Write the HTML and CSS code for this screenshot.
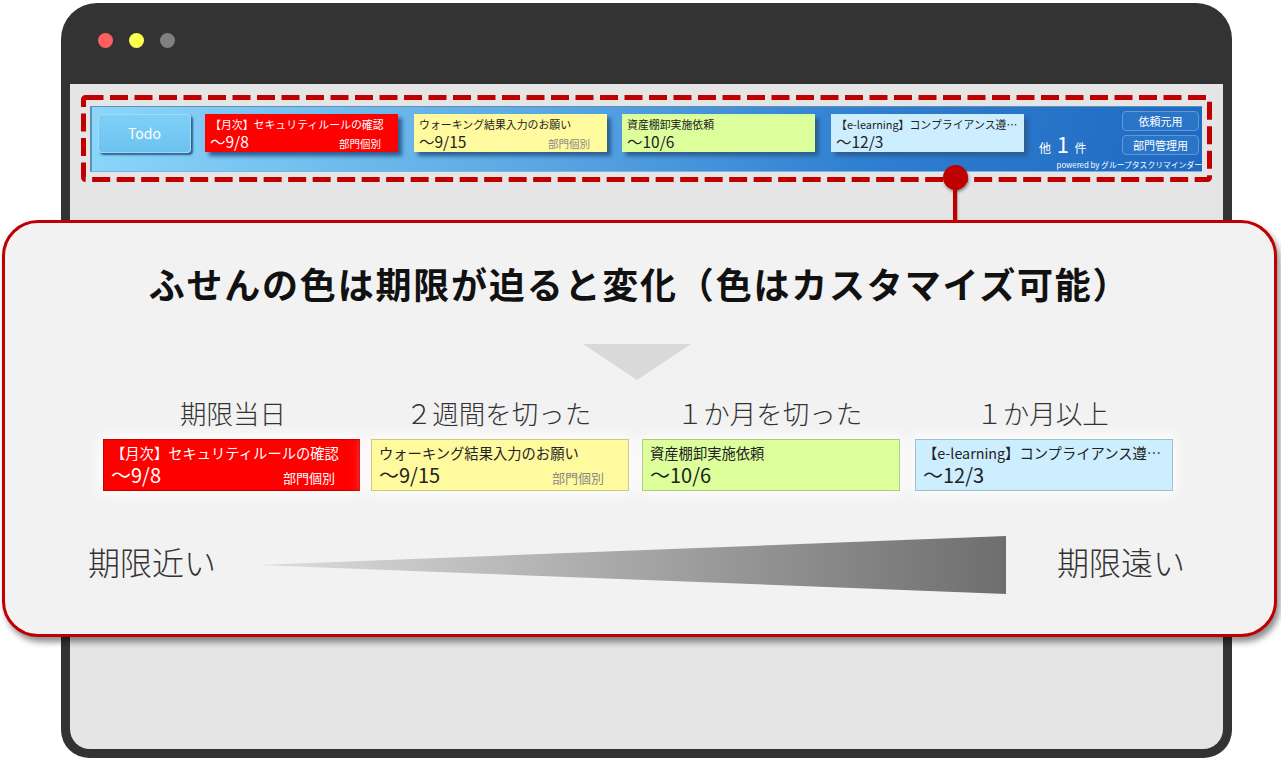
FILE: index.html
```html
<!DOCTYPE html>
<html lang="ja">
<head>
    <meta charset="UTF-8">
    <title>ふせんの色</title>
    <link rel="stylesheet" href="styles.css">
</head>
<body>
    <div class="stage">
        <div class="window">
            <div class="titlebar">
                <span class="dot dot-red"></span>
                <span class="dot dot-yellow"></span>
                <span class="dot dot-grey"></span>
            </div>
            <div class="screen">
                <div class="bar">
                    <div class="todo">Todo</div>
                    <div class="note note-red">
                        <div class="note-title">【月次】セキュリティルールの確認</div>
                        <div class="note-row"><span class="note-date">～9/8</span><span class="note-tag">部門個別</span></div>
                    </div>
                    <div class="note note-yellow">
                        <div class="note-title">ウォーキング結果入力のお願い</div>
                        <div class="note-row"><span class="note-date">～9/15</span><span class="note-tag">部門個別</span></div>
                    </div>
                    <div class="note note-green">
                        <div class="note-title">資産棚卸実施依頼</div>
                        <div class="note-row"><span class="note-date">～10/6</span></div>
                    </div>
                    <div class="note note-blue">
                        <div class="note-title">【e-learning】コンプライアンス遵…</div>
                        <div class="note-row"><span class="note-date">～12/3</span></div>
                    </div>
                    <div class="others">他 <b>1</b> 件</div>
                    <div class="bar-buttons">
                        <div class="bar-button">依頼元用</div>
                        <div class="bar-button">部門管理用</div>
                    </div>
                    <div class="powered">powered by グループタスクリマインダー</div>
                </div>
            </div>
        </div>

        <svg class="dashes" width="1281" height="200" viewBox="0 0 1281 200">
            <rect x="83.5" y="97.5" width="1126" height="82" rx="2" fill="none" stroke="#c00000" stroke-width="5" stroke-dasharray="18 6.5"/>
        </svg>
        <div class="marker"></div>
        <div class="marker-stem"></div>

        <div class="callout">
            <h1 class="callout-title">ふせんの色は期限が迫ると変化（色はカスタマイズ可能）</h1>
            <div class="arrow"></div>
            <div class="levels">
                <div class="level">
                    <div class="level-label">期限当日</div>
                    <div class="note note-large note-red">
                        <div class="note-title">【月次】セキュリティルールの確認</div>
                        <div class="note-row"><span class="note-date">～9/8</span><span class="note-tag">部門個別</span></div>
                    </div>
                </div>
                <div class="level">
                    <div class="level-label">２週間を切った</div>
                    <div class="note note-large note-yellow">
                        <div class="note-title">ウォーキング結果入力のお願い</div>
                        <div class="note-row"><span class="note-date">～9/15</span><span class="note-tag">部門個別</span></div>
                    </div>
                </div>
                <div class="level">
                    <div class="level-label">１か月を切った</div>
                    <div class="note note-large note-green">
                        <div class="note-title">資産棚卸実施依頼</div>
                        <div class="note-row"><span class="note-date">～10/6</span></div>
                    </div>
                </div>
                <div class="level">
                    <div class="level-label">１か月以上</div>
                    <div class="note note-large note-blue">
                        <div class="note-title">【e-learning】コンプライアンス遵…</div>
                        <div class="note-row"><span class="note-date">～12/3</span></div>
                    </div>
                </div>
            </div>
            <div class="scale">
                <span class="scale-label">期限近い</span>
                <div class="wedge"></div>
                <span class="scale-label">期限遠い</span>
            </div>
        </div>
    </div>
</body>
</html>
```

FILE: styles.css
```css
body {
    margin: 0;
    background: #fff;
    font-family: "Noto Sans CJK JP", "Noto Sans", sans-serif;
    color: #222;
}
.stage {
    position: relative;
    width: 1281px;
    height: 761px;
    box-sizing: border-box;
    padding: 3px 49px 3px 61px;
    overflow: hidden;
}
.window {
    display: flex;
    flex-direction: column;
    height: 100%;
    background: #333;
    border-radius: 36px 36px 28px 28px;
}
.titlebar {
    display: flex;
    gap: 16px;
    align-items: center;
    height: 81px;
    box-sizing: border-box;
    padding: 0 0 7px 37px;
}
.dot {
    width: 15px;
    height: 15px;
    border-radius: 50%;
}
.dot-red { background: #ff5f5f; }
.dot-yellow { background: #ffff4d; }
.dot-grey { background: #808080; }
.screen {
    flex: 1;
    margin: 0 9px 9px;
    padding: 22px 21px 0 20px;
    background: #e5e5e5;
    border-radius: 0 0 20px 20px;
}
.bar {
    position: relative;
    display: flex;
    align-items: flex-start;
    height: 66px;
    box-sizing: border-box;
    padding: 4px 3px 0 8px;
    background: linear-gradient(100deg, #8bd6fa 0%, #5ba8e4 40%, #2f7fd2 70%, #1f69c0 100%);
    border-left: 2px solid #5f93ad;
    border-top: 1px solid #5f93ad;
    border-bottom: 1px solid #7fb4dc;
}
.todo {
    width: 93px;
    height: 39px;
    margin: 3px 14px 0 -2px;
    flex: none;
    box-sizing: border-box;
    background: linear-gradient(#7fd0f7, #6cc2f0);
    border: 1px solid #9fdcf5;
    border-radius: 4px;
    box-shadow: 2px 2px 2px #2c5f8c;
    color: #fff;
    font-size: 14px;
    line-height: 37px;
    text-align: center;
}
.note {
    flex: none;
    width: 193px;
    height: 38px;
    box-sizing: border-box;
    margin: 3px 15px 0 0;
    padding: 3px 4px 0 5px;
    box-shadow: 4px 4px 4px #2d5f93;
    overflow: hidden;
    white-space: nowrap;
}
.note-title {
    font-size: 10.9px;
    line-height: 15px;
}
.note-row {
    display: flex;
    align-items: baseline;
    justify-content: space-between;
    padding-right: 13px;
}
.note-date {
    font-size: 15.5px;
    line-height: 19px;
}
.note-tag {
    font-size: 10.5px;
}
.note-red { margin-right: 16px; background: #ff0000; color: #fff; }
.note-yellow { background: #fffa9e; color: #222; }
.note-yellow .note-tag { color: #888; }
.note-green { margin-right: 16px; background: #dcff9c; color: #222; }
.note-blue { background: #cceeff; color: #222; }
.others {
    margin: 21px 0 0;
    color: #fff;
    font-size: 12px;
    line-height: 22px;
    word-spacing: 3px;
    white-space: nowrap;
}
.others b {
    font-size: 22px;
    font-weight: 400;
}
.bar-buttons {
    display: flex;
    flex-direction: column;
    gap: 4px;
    margin-left: auto;
}
.bar-button {
    width: 77px;
    height: 20px;
    box-sizing: border-box;
    border: 1px solid #5f9ad6;
    border-radius: 4px;
    background: #2a75c8;
    color: #fff;
    font-size: 11px;
    line-height: 18px;
    text-align: center;
}
.powered {
    position: absolute;
    right: 0;
    bottom: 0;
    color: #fff;
    font-size: 7.8px;
    line-height: 13px;
    white-space: nowrap;
}
.dashes {
    position: absolute;
    left: 0;
    top: 0;
}
.marker {
    position: absolute;
    left: 943px;
    top: 165px;
    width: 25px;
    height: 25px;
    border-radius: 50%;
    background: #c00000;
    box-shadow: 1px 2px 3px rgba(0, 0, 0, 0.4);
}
.marker-stem {
    position: absolute;
    left: 953px;
    top: 188px;
    width: 4px;
    height: 34px;
    background: #c00000;
    box-shadow: 1px 1px 2px rgba(0, 0, 0, 0.3);
}
.callout {
    position: absolute;
    left: 2px;
    top: 220px;
    width: 1275px;
    height: 417px;
    box-sizing: border-box;
    padding: 34px 0 0;
    background: #f2f2f2;
    border: 3px solid #c00000;
    border-radius: 36px;
    box-shadow: 3px 5px 6px rgba(0, 0, 0, 0.45);
}
.callout-title {
    margin: 0;
    font-size: 36px;
    font-weight: 700;
    line-height: 52px;
    letter-spacing: 1.8px;
    text-align: center;
    white-space: nowrap;
    color: #111;
}
.arrow {
    width: 0;
    height: 0;
    margin: 35px 0 0 578px;
    border-left: 54px solid transparent;
    border-right: 54px solid transparent;
    border-top: 36px solid #d9d9d9;
}
.levels {
    display: flex;
    gap: 12px;
    margin: 13px 0 0 98px;
}
.level {
    width: 258px;
}
.level:nth-child(1) { width: 257px; }
.level:nth-child(2) { margin-left: -1px; }
.level:nth-child(3) { margin-left: 1px; }
.level:nth-child(4) { margin-left: 3px; }
.level-label {
    height: 40px;
    color: #333;
    font-size: 26.5px;
    font-weight: 300;
    line-height: 40px;
    text-align: center;
    white-space: nowrap;
}
.level:nth-child(1) .level-label { padding-left: 3px; }
.level:nth-child(n+2) .level-label { padding-right: 3px; }
.note-large {
    width: 100%;
    height: 52px;
    margin: 6px 0 0;
    padding: 1px 7px 0;
    border: 1px solid rgba(0, 0, 0, 0.2);
    box-shadow: 0 0 14px 3px #fff;
}
.note-large .note-title {
    font-size: 14.3px;
    line-height: 23px;
}
.note-large .note-row {
    padding-right: 17px;
}
.note-large .note-date {
    font-size: 20px;
    line-height: 22px;
}
.note-large .note-tag {
    font-size: 13px;
}
.scale {
    display: flex;
    align-items: flex-start;
    margin: 41px 0 0 83px;
}
.scale-label {
    width: 127px;
    flex: none;
    color: #333;
    font-size: 32px;
    font-weight: 300;
    line-height: 58px;
    white-space: nowrap;
}
.wedge {
    flex: none;
    width: 748px;
    height: 58px;
    margin: 4px 51px 0 43px;
    background: linear-gradient(to right, #dedede, #6e6e6e);
    clip-path: polygon(0 50%, 100% 0, 100% 100%);
}
```
